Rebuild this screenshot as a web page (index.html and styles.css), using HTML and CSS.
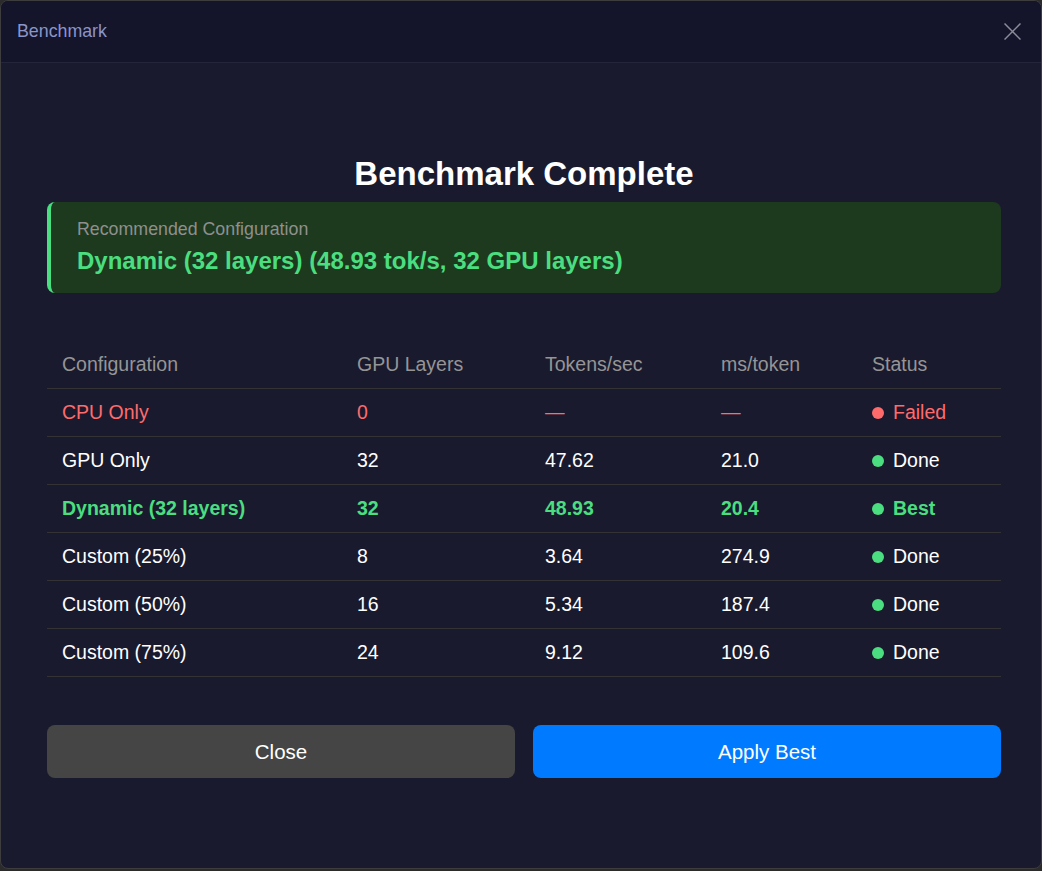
FILE: index.html
```html
<!DOCTYPE html>
<html>
<head>
    <title>Benchmark</title>
    <link rel="stylesheet" href="styles.css">
</head>
<body>
    <div class="window">
        <div class="window-header">
            <span class="window-title">Benchmark</span>
            <button class="close-icon" aria-label="Close">
                <svg width="17" height="17" viewBox="0 0 17 17">
                    <path d="M0.5 0.5 L16.5 16.5 M16.5 0.5 L0.5 16.5" stroke="#8b8b99" stroke-width="1.5" fill="none"/>
                </svg>
            </button>
        </div>
        <div class="window-body">
            <h1>Benchmark Complete</h1>
            <div class="recommended">
                <div class="recommended-label">Recommended Configuration</div>
                <div class="recommended-value">Dynamic (32 layers) (48.93 tok/s, 32 GPU layers)</div>
            </div>
            <table class="results">
                <thead>
                    <tr>
                        <th class="col-config">Configuration</th>
                        <th class="col-layers">GPU Layers</th>
                        <th class="col-tps">Tokens/sec</th>
                        <th class="col-ms">ms/token</th>
                        <th>Status</th>
                    </tr>
                </thead>
                <tbody>
                    <tr class="row-failed">
                        <td>CPU Only</td>
                        <td>0</td>
                        <td>&mdash;</td>
                        <td>&mdash;</td>
                        <td><span class="dot dot-red"></span>Failed</td>
                    </tr>
                    <tr>
                        <td>GPU Only</td>
                        <td>32</td>
                        <td>47.62</td>
                        <td>21.0</td>
                        <td><span class="dot"></span>Done</td>
                    </tr>
                    <tr class="row-best">
                        <td>Dynamic (32 layers)</td>
                        <td>32</td>
                        <td>48.93</td>
                        <td>20.4</td>
                        <td><span class="dot"></span>Best</td>
                    </tr>
                    <tr>
                        <td>Custom (25%)</td>
                        <td>8</td>
                        <td>3.64</td>
                        <td>274.9</td>
                        <td><span class="dot"></span>Done</td>
                    </tr>
                    <tr>
                        <td>Custom (50%)</td>
                        <td>16</td>
                        <td>5.34</td>
                        <td>187.4</td>
                        <td><span class="dot"></span>Done</td>
                    </tr>
                    <tr>
                        <td>Custom (75%)</td>
                        <td>24</td>
                        <td>9.12</td>
                        <td>109.6</td>
                        <td><span class="dot"></span>Done</td>
                    </tr>
                </tbody>
            </table>
            <div class="actions">
                <button class="btn btn-close">Close</button>
                <button class="btn btn-apply">Apply Best</button>
            </div>
        </div>
    </div>
</body>
</html>
```

FILE: styles.css
```css
html, body {
    margin: 0;
    height: 100%;
}
body {
    background-color: #2b2b2b;
    font-family: "Liberation Sans", Arial, sans-serif;
}
.window {
    box-sizing: border-box;
    height: 869px;
    border: 1px solid #3d3d3d;
    border-radius: 8px;
    background-color: #1a1a2e;
    overflow: hidden;
    display: flex;
    flex-direction: column;
}
.window-header {
    height: 61px;
    flex-shrink: 0;
    display: flex;
    align-items: center;
    justify-content: space-between;
    padding: 0 16px 0 16px;
    background-color: #14142b;
    border-bottom: 1px solid #24243a;
}
.window-title {
    font-size: 17.8px;
    color: #8a95c9;
}
.close-icon {
    background: none;
    border: none;
    padding: 4px;
    display: flex;
    cursor: pointer;
}
.window-body {
    padding: 93px 40px 0 46px;
    color: #fff;
}
h1 {
    margin: 0;
    text-align: center;
    font-size: 33px;
    line-height: 36px;
    font-weight: bold;
}
.recommended {
    margin-top: 10px;
    padding: 18px 26px 19px;
    background-color: #1e3a1e;
    border-left: 4px solid #4ade80;
    border-radius: 8px;
}
.recommended-label {
    font-size: 17.8px;
    line-height: 18px;
    color: #8f8f8f;
}
.recommended-value {
    margin-top: 10px;
    font-size: 24px;
    line-height: 26px;
    font-weight: bold;
    color: #4ade80;
}
.results {
    width: 954px;
    margin-top: 48px;
    border-collapse: collapse;
    table-layout: fixed;
    font-size: 19.5px;
}
.results th,
.results td {
    text-align: left;
    padding: 12px 15px;
    line-height: 23px;
    border-bottom: 1px solid #333;
    white-space: nowrap;
}
.results th {
    font-weight: normal;
    color: #959595;
}
.col-config { width: 265px; }
.col-layers { width: 158px; }
.col-tps { width: 146px; }
.col-ms { width: 121px; }
.row-failed td {
    color: #ff6b6b;
}
.row-best td {
    color: #4ade80;
    font-weight: bold;
}
.dot {
    display: inline-block;
    width: 12px;
    height: 12px;
    border-radius: 50%;
    background-color: #4ade80;
    margin-right: 9px;
    vertical-align: 0;
}
.dot-red {
    background-color: #ff6b6b;
}
.actions {
    display: flex;
    gap: 18px;
    width: 954px;
    margin-top: 48px;
}
.btn {
    flex: 1;
    border: none;
    border-radius: 8px;
    padding: 15px;
    font-family: inherit;
    font-size: 20.5px;
    line-height: 23px;
    color: #fff;
    cursor: pointer;
}
.btn-close {
    background-color: #454545;
}
.btn-apply {
    background-color: #007bff;
}
```
